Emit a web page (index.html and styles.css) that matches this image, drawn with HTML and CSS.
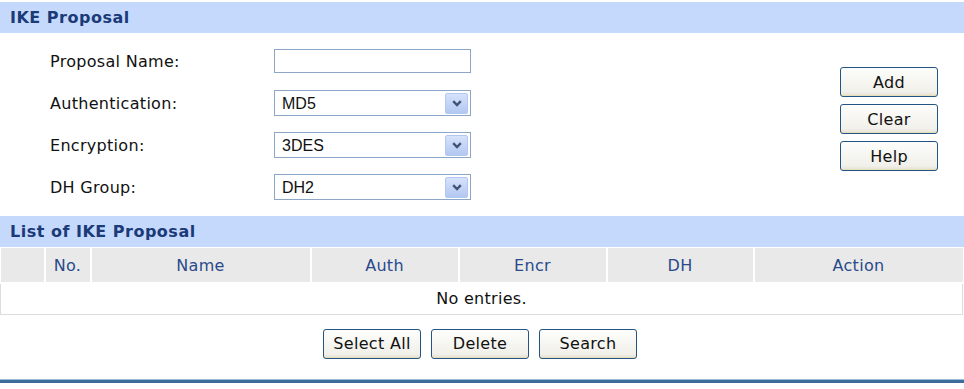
FILE: index.html
```html
<!DOCTYPE html>
<html lang="en">
<head>
  <meta charset="UTF-8">
  <title>IKE Proposal</title>
  <link rel="stylesheet" href="styles.css">
</head>
<body>

<!-- IKE Proposal form -->
<div class="title">IKE Proposal</div>
<div class="form-area">
  <div class="fields">
    <div class="row">
      <label class="label">Proposal Name:</label>
      <input type="text" class="text-input">
    </div>
    <div class="row">
      <label class="label">Authentication:</label>
      <span class="select-wrap">
        <select class="select"><option>MD5</option><option>SHA</option></select>
        <span class="arrow"><svg width="10" height="7" viewBox="0 0 10 7"><path d="M1.2 1.2 L5 5 L8.8 1.2" fill="none" stroke="#3f5378" stroke-width="2.4"/></svg></span>
      </span>
    </div>
    <div class="row">
      <label class="label">Encryption:</label>
      <span class="select-wrap">
        <select class="select"><option>3DES</option><option>DES</option></select>
        <span class="arrow"><svg width="10" height="7" viewBox="0 0 10 7"><path d="M1.2 1.2 L5 5 L8.8 1.2" fill="none" stroke="#3f5378" stroke-width="2.4"/></svg></span>
      </span>
    </div>
    <div class="row">
      <label class="label">DH Group:</label>
      <span class="select-wrap">
        <select class="select"><option>DH2</option><option>DH1</option></select>
        <span class="arrow"><svg width="10" height="7" viewBox="0 0 10 7"><path d="M1.2 1.2 L5 5 L8.8 1.2" fill="none" stroke="#3f5378" stroke-width="2.4"/></svg></span>
      </span>
    </div>
  </div>
  <div class="side-buttons">
    <button class="btn">Add</button>
    <button class="btn">Clear</button>
    <button class="btn">Help</button>
  </div>
</div>

<!-- List -->
<div class="title">List of IKE Proposal</div>
<table class="list">
  <tr class="head">
    <th class="c-check"></th>
    <th class="c-no">No.</th>
    <th class="c-name">Name</th>
    <th class="c-auth">Auth</th>
    <th class="c-encr">Encr</th>
    <th class="c-dh">DH</th>
    <th>Action</th>
  </tr>
  <tr class="empty">
    <td colspan="7">No entries.</td>
  </tr>
</table>

<div class="bottom-buttons">
  <button class="btn">Select All</button>
  <button class="btn">Delete</button>
  <button class="btn">Search</button>
</div>

<div class="footer-line"></div>

</body>
</html>
```

FILE: styles.css
```css
body {
  margin: 0;
  padding-top: 2px;
  font-family: "DejaVu Sans", Verdana, sans-serif;
  font-size: 16px;
  letter-spacing: 0.3px;
  color: #111;
  background: #fff;
}

* {
  box-sizing: border-box;
}

.title {
  height: 31px;
  line-height: 31px;
  padding-left: 10px;
  background: #c5d9fc;
  color: #1b3a78;
  font-weight: bold;
  font-size: 16px;
  letter-spacing: 0.5px;
}

/* Form */
.form-area {
  display: flex;
  padding: 7px 0 6px 0;
  margin-bottom: 2px;
}

.fields {
  flex: 1;
}

.row {
  display: flex;
  align-items: center;
  height: 42px;
  padding-left: 50px;
}

.label {
  width: 224px;
}

.text-input {
  width: 197px;
  height: 24px;
  border: 1px solid #8ba6c6;
  margin: 0;
  font: inherit;
}

.select-wrap {
  position: relative;
  display: inline-block;
}

.select {
  appearance: none;
  -webkit-appearance: none;
  width: 197px;
  height: 26px;
  margin: 0;
  border: 1px solid #8ba6c6;
  background: #fff;
  padding: 0 0 0 7px;
  font-family: "Liberation Sans", Arial, sans-serif;
  font-size: 16px;
  letter-spacing: 0;
  color: #111;
}

.arrow {
  position: absolute;
  top: 3px;
  right: 3px;
  width: 23px;
  height: 21px;
  border: 1px solid #b3c8f0;
  border-radius: 2px;
  background: linear-gradient(#d6e2fb, #b2c7f1);
  display: flex;
  align-items: center;
  justify-content: center;
  pointer-events: none;
}

.side-buttons {
  display: flex;
  flex-direction: column;
  gap: 7px;
  padding-top: 27px;
  margin-right: 26px;
}

/* Buttons */
.btn {
  width: 98px;
  height: 30px;
  margin: 0;
  padding: 0;
  border: 1px solid #245486;
  border-radius: 3px;
  background: linear-gradient(#fdfdfb, #f1f0ea 85%, #e4e1d2);
  box-shadow: inset 0 -1px 0 #e6dfb8;
  font-family: "DejaVu Sans", Verdana, sans-serif;
  font-size: 16px;
  letter-spacing: 0.3px;
  color: #111;
  cursor: pointer;
}

/* List table */
.list {
  width: 963px;
  border-collapse: collapse;
  margin-top: 1px;
}

.head th {
  height: 35px;
  background: #e9e9e9;
  color: #2a4a8c;
  font-weight: normal;
  border-left: 2px solid #fff;
  padding: 0;
}

.head th:first-child {
  border-left: none;
}

.c-check { width: 44px; }
.c-no { width: 46px; }
.c-name { width: 220px; }
.c-auth { width: 148px; }
.c-encr { width: 148px; }
.c-dh { width: 147px; }

.empty td {
  height: 31px;
  text-align: center;
  border: 1px solid #dcdcdc;
  border-top: 2px solid #fff;
}

.bottom-buttons {
  display: flex;
  justify-content: center;
  gap: 10px;
  padding-top: 14px;
  padding-right: 4px;
}

.footer-line {
  margin-top: 20px;
  height: 4px;
  background: #3a6c9c;
  border-top: 1px solid #9dbad6;
}
```
